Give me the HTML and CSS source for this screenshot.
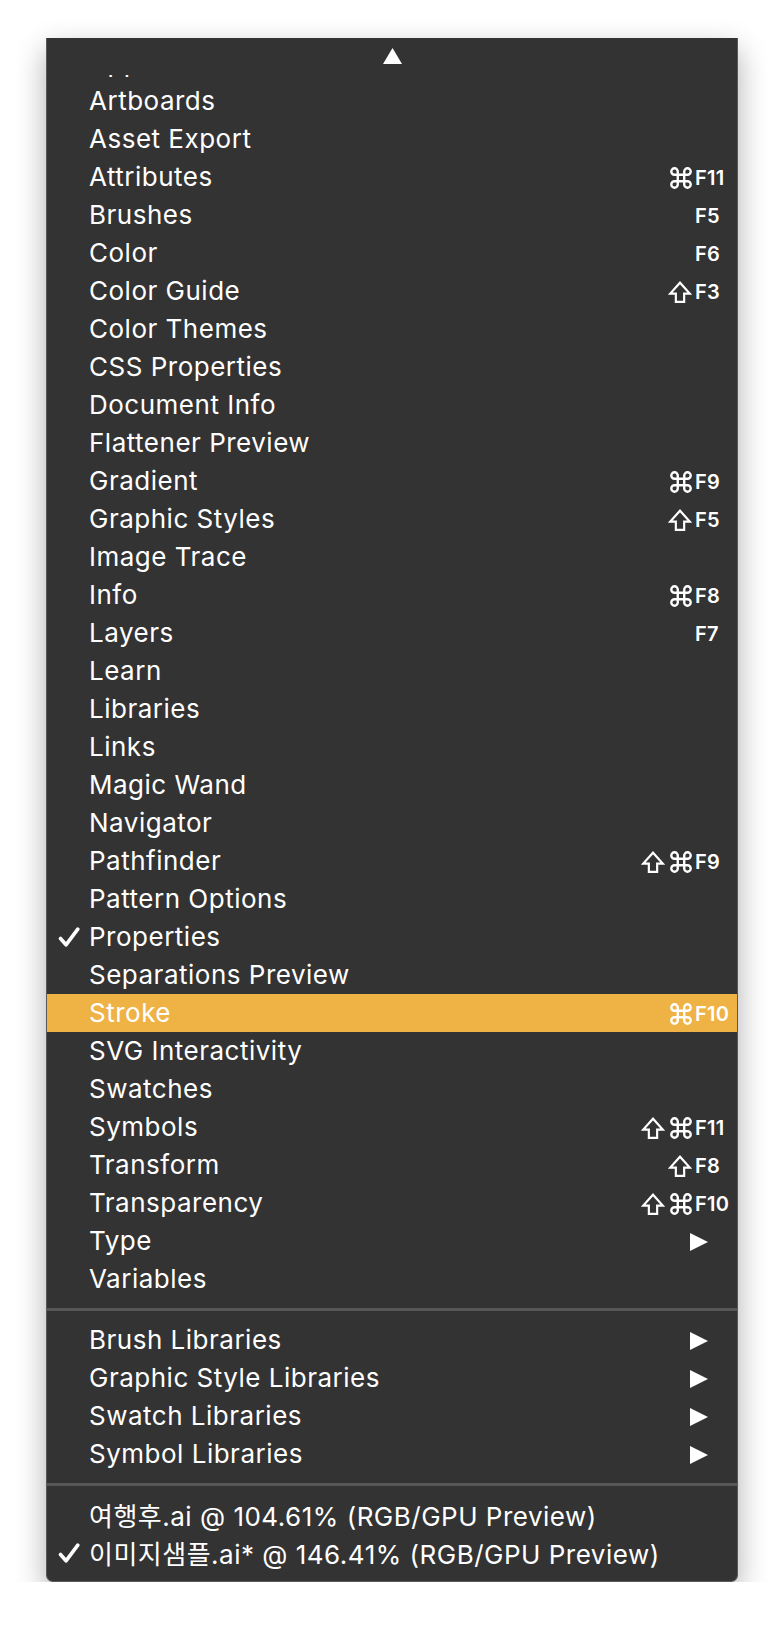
FILE: index.html
```html
<!DOCTYPE html>
<html lang="en">
<head>
  <meta charset="UTF-8">
  <title>Window Menu</title>
  <link rel="stylesheet" href="styles.css">
</head>
<body>
  <svg class="defs" width="0" height="0">
    <symbol id="cmd" viewBox="1.8 1.8 20.4 20.4">
      <path d="M15 6v12a3 3 0 1 0 3-3H6a3 3 0 1 0 3 3V6a3 3 0 1 0-3 3h12a3 3 0 1 0-3-3" fill="none" stroke="#fff" stroke-width="2.2" stroke-linejoin="round"/>
    </symbol>
    <symbol id="shift" viewBox="1.2 0.6 21.6 21.2">
      <path d="M8 20.7v-8H2.6L12 2.2l9.4 10.5H16v8z" fill="none" stroke="#fff" stroke-width="2.1" stroke-linejoin="miter"/>
    </symbol>
    <symbol id="tick" viewBox="0 0 22 20">
      <path d="M2.5 11.5l5.5 6.3L19.8 2.2" fill="none" stroke="#fff" stroke-width="3.6" stroke-linecap="round" stroke-linejoin="round"/>
    </symbol>
    <symbol id="tri" viewBox="0 0 18 18">
      <path d="M0 0L18 9L0 18z" fill="#fff"/>
    </symbol>
  </svg>

  <div class="menu">
    <div class="scroll-up">
      <svg width="19" height="16" viewBox="0 0 19 16"><path d="M9.5 0L19 16H0z" fill="#fff"/></svg>
    </div>
    <div class="clip">
      <div class="row"><span class="check"></span><span class="label">Appearance</span></div>
    </div>

    <div class="row"><span class="check"></span><span class="label">Artboards</span></div>
    <div class="row"><span class="check"></span><span class="label">Asset Export</span></div>
    <div class="row"><span class="check"></span><span class="label">Attributes</span>
      <span class="mods"><svg class="i-cmd"><use href="#cmd"/></svg></span><span class="key">F11</span></div>
    <div class="row"><span class="check"></span><span class="label">Brushes</span><span class="key">F5</span></div>
    <div class="row"><span class="check"></span><span class="label">Color</span><span class="key">F6</span></div>
    <div class="row"><span class="check"></span><span class="label">Color Guide</span>
      <span class="mods"><svg class="i-shift"><use href="#shift"/></svg></span><span class="key">F3</span></div>
    <div class="row"><span class="check"></span><span class="label">Color Themes</span></div>
    <div class="row"><span class="check"></span><span class="label">CSS Properties</span></div>
    <div class="row"><span class="check"></span><span class="label">Document Info</span></div>
    <div class="row"><span class="check"></span><span class="label">Flattener Preview</span></div>
    <div class="row"><span class="check"></span><span class="label">Gradient</span>
      <span class="mods"><svg class="i-cmd"><use href="#cmd"/></svg></span><span class="key">F9</span></div>
    <div class="row"><span class="check"></span><span class="label">Graphic Styles</span>
      <span class="mods"><svg class="i-shift"><use href="#shift"/></svg></span><span class="key">F5</span></div>
    <div class="row"><span class="check"></span><span class="label">Image Trace</span></div>
    <div class="row"><span class="check"></span><span class="label">Info</span>
      <span class="mods"><svg class="i-cmd"><use href="#cmd"/></svg></span><span class="key">F8</span></div>
    <div class="row"><span class="check"></span><span class="label">Layers</span><span class="key">F7</span></div>
    <div class="row"><span class="check"></span><span class="label">Learn</span></div>
    <div class="row"><span class="check"></span><span class="label">Libraries</span></div>
    <div class="row"><span class="check"></span><span class="label">Links</span></div>
    <div class="row"><span class="check"></span><span class="label">Magic Wand</span></div>
    <div class="row"><span class="check"></span><span class="label">Navigator</span></div>
    <div class="row"><span class="check"></span><span class="label">Pathfinder</span>
      <span class="mods"><svg class="i-shift"><use href="#shift"/></svg><svg class="i-cmd"><use href="#cmd"/></svg></span><span class="key">F9</span></div>
    <div class="row"><span class="check"></span><span class="label">Pattern Options</span></div>
    <div class="row"><span class="check"><svg class="i-tick"><use href="#tick"/></svg></span><span class="label">Properties</span></div>
    <div class="row"><span class="check"></span><span class="label">Separations Preview</span></div>
    <div class="row active"><span class="check"></span><span class="label">Stroke</span>
      <span class="mods"><svg class="i-cmd"><use href="#cmd"/></svg></span><span class="key">F10</span></div>
    <div class="row"><span class="check"></span><span class="label">SVG Interactivity</span></div>
    <div class="row"><span class="check"></span><span class="label">Swatches</span></div>
    <div class="row"><span class="check"></span><span class="label">Symbols</span>
      <span class="mods"><svg class="i-shift"><use href="#shift"/></svg><svg class="i-cmd"><use href="#cmd"/></svg></span><span class="key">F11</span></div>
    <div class="row"><span class="check"></span><span class="label">Transform</span>
      <span class="mods"><svg class="i-shift"><use href="#shift"/></svg></span><span class="key">F8</span></div>
    <div class="row"><span class="check"></span><span class="label">Transparency</span>
      <span class="mods"><svg class="i-shift"><use href="#shift"/></svg><svg class="i-cmd"><use href="#cmd"/></svg></span><span class="key">F10</span></div>
    <div class="row"><span class="check"></span><span class="label">Type</span><svg class="i-sub"><use href="#tri"/></svg></div>
    <div class="row"><span class="check"></span><span class="label">Variables</span></div>

    <div class="sep"></div>

    <div class="row"><span class="check"></span><span class="label">Brush Libraries</span><svg class="i-sub"><use href="#tri"/></svg></div>
    <div class="row"><span class="check"></span><span class="label">Graphic Style Libraries</span><svg class="i-sub"><use href="#tri"/></svg></div>
    <div class="row"><span class="check"></span><span class="label">Swatch Libraries</span><svg class="i-sub"><use href="#tri"/></svg></div>
    <div class="row"><span class="check"></span><span class="label">Symbol Libraries</span><svg class="i-sub"><use href="#tri"/></svg></div>

    <div class="sep"></div>

    <div class="row"><span class="check"></span><span class="label">여행후.ai @ 104.61% (RGB/GPU Preview)</span></div>
    <div class="row"><span class="check"><svg class="i-tick"><use href="#tick"/></svg></span><span class="label">이미지샘플.ai* @ 146.41% (RGB/GPU Preview)</span></div>
  </div>
</body>
</html>
```

FILE: styles.css
```css
body {
  margin: 0;
  background: #fff;
  font-family: "Inter", "Noto Sans CJK KR", sans-serif;
  color: #fff;
}

.defs {
  position: absolute;
}

.menu {
  margin: 38px 0 0 46px;
  width: 692px;
  box-sizing: border-box;
  background: #333333;
  border: 1px solid #595959;
  border-top: none;
  border-radius: 0 0 7px 7px;
  padding-bottom: 9px;
  box-shadow: 0 12px 30px rgba(0, 0, 0, 0.32);
}

.scroll-up {
  height: 37px;
  box-sizing: border-box;
  padding-top: 10px;
  display: flex;
  justify-content: center;
  align-items: flex-start;
}

.clip {
  height: 7px;
  overflow: hidden;
}

.clip .row {
  margin-top: -31px;
}

.row {
  display: flex;
  align-items: center;
  height: 38px;
  box-sizing: border-box;
  padding-bottom: 1px;
  font-size: 26px;
  letter-spacing: 0.5px;
  white-space: nowrap;
}

.row.active {
  background: #efb345;
}

.check {
  width: 42px;
  flex: none;
  box-sizing: border-box;
  padding-left: 11px;
  display: flex;
  align-items: center;
}

.label {
  flex: 1;
}

.mods {
  display: flex;
  align-items: center;
  gap: 5px;
  margin-right: 3px;
  padding-top: 3px;
}

.key {
  width: 42px;
  flex: none;
  font-size: 20px;
  font-weight: 600;
  letter-spacing: 0.3px;
  padding-top: 3px;
}

.i-cmd {
  width: 22px;
  height: 22px;
}

.i-shift {
  width: 24px;
  height: 22px;
}

.i-tick {
  width: 22px;
  height: 20px;
}

.i-sub {
  width: 18px;
  height: 18px;
  margin-right: 29px;
  margin-top: 3px;
}

.sep {
  height: 3px;
  margin: 10px 0;
  background: #575757;
}
```
